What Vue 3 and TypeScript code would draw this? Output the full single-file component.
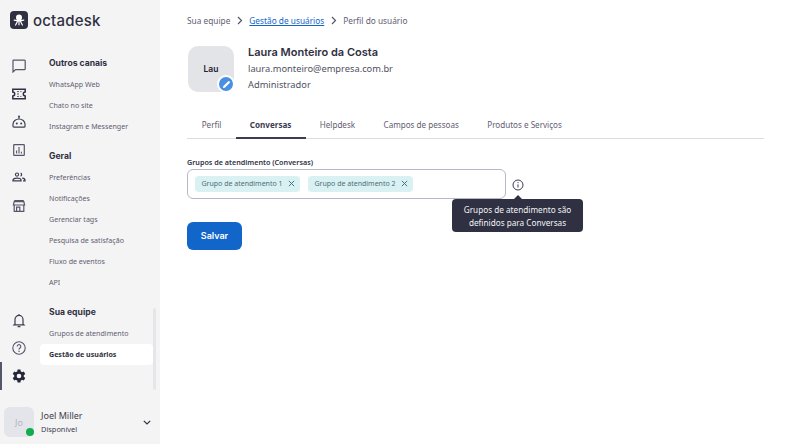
<script setup lang="ts">
const topIcons = ['chat', 'ticket', 'bot', 'chart', 'people', 'store']
const sections = [
  { title: 'Outros canais', items: ['WhatsApp Web', 'Chato no site', 'Instagram e Messenger'] },
  { title: 'Geral', items: ['Preferências', 'Notificações', 'Gerenciar tags', 'Pesquisa de satisfação', 'Fluxo de eventos', 'API'] },
  { title: 'Sua equipe', items: ['Grupos de atendimento', 'Gestão de usuários'] },
]
const tabs = ['Perfil', 'Conversas', 'Helpdesk', 'Campos de pessoas', 'Produtos e Serviços']
const chips = ['Grupo de atendimento 1', 'Grupo de atendimento 2']
</script>

<template>
  <div class="page">
    <aside class="sidebar">
      <div class="logo">
        <svg class="logo-mark" width="18" height="18" viewBox="0 0 18 18">
          <rect width="18" height="18" rx="4" fill="#2f3042" />
          <circle cx="9" cy="6.4" r="3" fill="#fff" />
          <rect x="6.8" y="7" width="4.4" height="3.4" fill="#fff" />
          <path d="M7 9.6 4.2 9.2M11 9.6l2.8-.4M7.6 10.2 5.6 14M10.4 10.2l2 3.8M9 10.4v3.4" stroke="#fff" stroke-width="1.2" stroke-linecap="round" fill="none" />
        </svg>
        <span class="logo-text">octadesk</span>
      </div>
      <div class="side-body">
        <div class="rail">
          <div class="rail-group">
            <span v-for="icon in topIcons" :key="icon" class="rail-icon">
              <svg width="14" height="14" viewBox="0 0 14 14" fill="none" stroke="#55566a" stroke-width="1.1">
                <path v-if="icon === 'chat'" d="M1.4 1.2h11.2a.6.6 0 0 1 .6.6v8.2a.6.6 0 0 1-.6.6H3.6L1 13V1.6z" stroke-width="1.2" />
                <g v-else-if="icon === 'ticket'" stroke="#2f3042">
                  <path d="M.8 2.2h12.4v2.9a1.9 1.9 0 0 0 0 3.8v2.9H.8V8.9a1.9 1.9 0 0 0 0-3.8z" stroke-width="1.5" />
                  <path d="M5.2 4.6h1.6M5.2 7h1.6M5.2 9.4h1.6M8.4 4.6h1M8.4 9.4h1" stroke-width="1" />
                </g>
                <g v-else-if="icon === 'bot'" stroke="#3c3d50">
                  <path d="M1 9.2a6 5.2 0 0 1 12 0v2a1 1 0 0 1-1 1H2a1 1 0 0 1-1-1z" stroke-width="1.2" />
                  <path d="M7 3.8V2" />
                  <circle cx="7" cy="1.4" r="1" fill="#3c3d50" stroke="none" />
                  <circle cx="4.8" cy="8.6" r="1" fill="#3c3d50" stroke="none" />
                  <circle cx="9.2" cy="8.6" r="1" fill="#3c3d50" stroke="none" />
                </g>
                <g v-else-if="icon === 'chart'">
                  <rect x="1.7" y="1.7" width="10.6" height="10.6" rx=".6" stroke-width="1.2" />
                  <path d="M4.6 10.4V7.6M7 10.4V4M9.4 10.4V8.8" />
                </g>
                <g v-else-if="icon === 'people'" stroke="#3c3d50" transform="translate(0 -.4)">
                  <circle cx="5" cy="4" r="1.6" stroke-width="1.1" />
                  <path d="M8.6 2.5a1.6 1.6 0 0 1 0 3" stroke-width="1.2" />
                  <path d="M1 10.2v-.6c0-1.3 1.9-2.1 4-2.1s4 .8 4 2.1v.6zM10.2 7.6c1.6.2 2.8.9 2.8 2v.6h-2" stroke-width="1.3" />
                </g>
                <path v-else d="M2.2 1.6h9.6M1.4 6l.8-3.4h9.6l.8 3.4zM2.2 6v6.4h5.6V8.2H4.6v4.2M11.8 6v6.4H7.8" stroke-width="1.2" />
              </svg>
            </span>
          </div>
          <div class="rail-group">
            <span class="rail-icon">
              <svg width="14" height="15" viewBox="0 0 14 15" fill="none" stroke="#3c3d50" stroke-width="1.2">
                <path d="M3 10.8V6.4a4 4 0 0 1 8 0v4.4l1 1H2zM5.6 13.6h2.8M7 1v1.4" />
              </svg>
            </span>
            <span class="rail-icon">
              <svg width="14" height="14" viewBox="0 0 14 14" fill="none" stroke="#55566a" stroke-width="1.1">
                <circle cx="7" cy="7" r="6.2" />
                <path d="M5.2 5.4a1.8 1.8 0 1 1 2.7 1.6c-.6.4-.9.7-.9 1.4" />
                <circle cx="7" cy="10.2" r=".75" fill="#55566a" stroke="none" />
              </svg>
            </span>
            <span class="rail-icon active">
              <svg width="16" height="16" viewBox="0 0 24 24" fill="#23243a">
                <path fill-rule="evenodd" d="M19.6 13.2a7.8 7.8 0 0 0 0-2.4l2.3-1.7-2.2-3.8-2.6 1.1a8 8 0 0 0-2-1.2L14.7 2.4h-4.4l-.4 2.8a8 8 0 0 0-2 1.2L5.3 5.3 3.1 9.1l2.3 1.7a7.8 7.8 0 0 0 0 2.4l-2.3 1.7 2.2 3.8 2.6-1.1a8 8 0 0 0 2 1.2l.4 2.8h4.4l.4-2.8a8 8 0 0 0 2-1.2l2.6 1.1 2.2-3.8zM12.5 15.5a3.5 3.5 0 1 1 0-7 3.5 3.5 0 0 1 0 7z" transform="translate(-.5 0)" />
              </svg>
            </span>
          </div>
        </div>
        <nav class="menu">
          <section v-for="section in sections" :key="section.title" class="menu-section">
            <h3>{{ section.title }}</h3>
            <a v-for="item in section.items" :key="item" class="menu-item" :class="{ selected: item === 'Gestão de usuários' }">{{ item }}</a>
          </section>
          <span class="scrollbar"></span>
        </nav>
      </div>
      <div class="user">
        <div class="user-avatar">Jo<span class="dot"></span></div>
        <div class="user-text">
          <span class="user-name">Joel Miller</span>
          <span class="user-status">Disponível</span>
        </div>
        <svg class="chevron" width="8" height="5" viewBox="0 0 8 5" fill="none" stroke="#2f3042" stroke-width="1.2">
          <path d="M.8.8 4 4 7.2.8" />
        </svg>
      </div>
    </aside>

    <main class="content">
      <div class="crumbs">
        <span>Sua equipe</span>
        <svg width="6" height="9" viewBox="0 0 6 9" fill="none" stroke="#555668" stroke-width="1.2"><path d="M1 1l3.5 3.5L1 8" /></svg>
        <a>Gestão de usuários</a>
        <svg width="6" height="9" viewBox="0 0 6 9" fill="none" stroke="#555668" stroke-width="1.2"><path d="M1 1l3.5 3.5L1 8" /></svg>
        <span>Perfil do usuário</span>
      </div>

      <div class="profile">
        <div class="avatar">
          Lau
          <span class="edit">
            <svg width="9" height="9" viewBox="0 0 10 10"><path d="M1 9l.5-2.2L7 1.3a.8.8 0 0 1 1.1 0l.6.6a.8.8 0 0 1 0 1.1L3.2 8.5z" fill="#fff" /></svg>
          </span>
        </div>
        <div class="who">
          <strong>Laura Monteiro da Costa</strong>
          <span>laura.monteiro@empresa.com.br</span>
          <span>Administrador</span>
        </div>
      </div>

      <div class="tabs">
        <span v-for="tab in tabs" :key="tab" class="tab" :class="{ current: tab === 'Conversas' }">{{ tab }}</span>
      </div>

      <label class="field-label">Grupos de atendimento (Conversas)</label>
      <div class="field-row">
        <div class="field">
          <span v-for="chip in chips" :key="chip" class="chip">
            {{ chip }}
            <svg width="7" height="7" viewBox="0 0 8 8" fill="none" stroke="#3d7078" stroke-width="1.1"><path d="M1 1l6 6M7 1L1 7" /></svg>
          </span>
        </div>
        <span class="info">
          <svg width="12" height="12" viewBox="0 0 12 12" fill="none" stroke="#3c3d50" stroke-width="1">
            <circle cx="6" cy="6" r="5" />
            <path d="M6 5.4v3" />
            <circle cx="6" cy="3.6" r=".6" fill="#3c3d50" stroke="none" />
          </svg>
          <span class="tooltip">Grupos de atendimento são definidos para Conversas</span>
        </span>
      </div>

      <button class="save" type="button">Salvar</button>
    </main>
  </div>
</template>

<style>
html, body { margin: 0; background: #fff; }
</style>

<style scoped>
.page {
  display: flex;
  width: 791px;
  height: 444px;
  overflow: hidden;
  font-family: "Noto Sans", sans-serif;
  color: #2f3042;
  background: #fff;
}
.sidebar {
  width: 160px;
  flex: none;
  display: flex;
  flex-direction: column;
  background: #f4f4f4;
}
.logo {
  height: 38px;
  padding: 2px 0 0 10px;
  box-sizing: border-box;
  display: flex;
  align-items: center;
  gap: 5px;
}
.logo-text {
  font-family: Inter, sans-serif;
  font-size: 15px;
  font-weight: 500;
  letter-spacing: 0.2px;
  color: #2f3042;
}
.side-body {
  flex: 1;
  display: flex;
  min-height: 0;
}
.rail {
  width: 40px;
  flex: none;
  display: flex;
  flex-direction: column;
  justify-content: space-between;
  padding: 14px 0 0;
  box-sizing: border-box;
}
.rail-group { display: flex; flex-direction: column; }
.rail-icon {
  position: relative;
  height: 28px;
  display: flex;
  align-items: center;
  justify-content: center;
  padding-right: 2px;
}
.rail-icon.active::before {
  content: "";
  position: absolute;
  left: 0;
  top: 0;
  width: 2px;
  height: 28px;
  background: #55566a;
}
.menu {
  position: relative;
  flex: 1;
  padding-top: 15px;
}
.menu-section { margin-bottom: 9px; }
.menu-section h3 {
  margin: 0 0 1px 9px;
  height: 20px;
  line-height: 20px;
  font-family: Inter, sans-serif;
  font-size: 8.6px;
  font-weight: 700;
  color: #2f3042;
}
.menu-item {
  display: block;
  width: 113px;
  height: 21px;
  line-height: 21px;
  padding-left: 9px;
  box-sizing: border-box;
  font-size: 7.1px;
  color: #5f6072;
}
.menu-item.selected {
  background: #fff;
  border-radius: 4px;
  color: #2f3042;
  font-weight: 700;
}
.scrollbar {
  position: absolute;
  left: 113px;
  top: 270px;
  width: 3px;
  height: 82px;
  border-radius: 2px;
  background: #e6e6ea;
}
.user {
  height: 54px;
  padding: 16px 0 6px 4px;
  box-sizing: border-box;
  display: flex;
  align-items: center;
}
.user-avatar {
  position: relative;
  width: 30px;
  height: 30px;
  flex: none;
  border-radius: 6px;
  background: #e4e5ea;
  color: #b4b5bf;
  font-size: 9px;
  display: flex;
  align-items: center;
  justify-content: center;
}
.dot {
  position: absolute;
  right: 0;
  bottom: 1px;
  width: 8px;
  height: 8px;
  border-radius: 50%;
  background: #12ad4f;
}
.user-text {
  flex: 1;
  margin-left: 7px;
  display: flex;
  flex-direction: column;
  gap: 2px;
}
.user-name { font-size: 9px; line-height: 12px; color: #3c3d50; }
.user-status { font-size: 7.4px; line-height: 11px; color: #3c3d50; }
.chevron { margin-right: 9px; }
.content {
  flex: 1;
  padding: 13px 27px 0;
  min-width: 0;
}
.crumbs {
  display: flex;
  align-items: center;
  gap: 6.5px;
  height: 14px;
  font-size: 8.3px;
  color: #5f6072;
}
.crumbs a {
  color: #1366c9;
  text-decoration: underline;
}
.profile {
  display: flex;
  gap: 14px;
  margin-top: 19px;
  padding-left: 1px;
}
.avatar {
  position: relative;
  width: 46px;
  height: 46px;
  border-radius: 10px;
  background: #e3e4e8;
  display: flex;
  align-items: center;
  justify-content: center;
  font-family: Inter, sans-serif;
  font-size: 8.5px;
  font-weight: 600;
  color: #1f2030;
}
.edit {
  position: absolute;
  right: -1px;
  bottom: -1px;
  width: 14px;
  height: 14px;
  border: 2px solid #fff;
  border-radius: 50%;
  background: #4a90e2;
  display: flex;
  align-items: center;
  justify-content: center;
}
.who {
  display: flex;
  flex-direction: column;
  margin-top: -2px;
  font-size: 9.3px;
  line-height: 16.5px;
  color: #4f5062;
}
.who strong {
  font-family: Inter, sans-serif;
  font-size: 11px;
  font-weight: 600;
  color: #2f3042;
}
.tabs {
  display: flex;
  height: 30px;
  margin-top: 15px;
  width: 577px;
  padding-left: 0.5px;
  border-bottom: 1px solid #dcdce0;
  box-sizing: border-box;
  font-size: 8.1px;
  color: #5f6072;
}
.tab {
  padding: 0 14.2px;
  line-height: 31px;
}
.tab.current {
  height: 30px;
  box-sizing: border-box;
  border-bottom: 2px solid #3c3d50;
  font-weight: 700;
  color: #3c3d50;
}
.field-label {
  display: block;
  margin-top: 17px;
  height: 13px;
  line-height: 13px;
  font-size: 7.2px;
  font-weight: 600;
  color: #2f3042;
}
.field-row {
  display: flex;
  align-items: center;
  gap: 6px;
}
.field {
  width: 319px;
  height: 30px;
  box-sizing: border-box;
  border: 1px solid #b7b8c6;
  border-radius: 6px;
  display: flex;
  align-items: center;
  gap: 8.5px;
  padding: 0 7px;
}
.chip {
  height: 16px;
  border-radius: 4px;
  background: #d9f1f2;
  display: flex;
  align-items: center;
  gap: 5px;
  padding: 0 5px 0 6.5px;
  font-size: 7px;
  color: #4f6f75;
  white-space: nowrap;
}
.info {
  position: relative;
  display: flex;
  margin-top: 2px;
}
.tooltip {
  position: absolute;
  left: -60px;
  top: 20px;
  width: 131px;
  height: 33px;
  box-sizing: border-box;
  padding: 4px 8px;
  border-radius: 4px;
  background: #2f3042;
  color: #f4f4f6;
  font-size: 8.2px;
  line-height: 13px;
  text-align: center;
}
.tooltip::before {
  content: "";
  position: absolute;
  left: 62px;
  top: -4px;
  border-left: 4px solid transparent;
  border-right: 4px solid transparent;
  border-bottom: 4px solid #2f3042;
}
.save {
  display: block;
  margin-top: 23px;
  width: 55px;
  height: 28px;
  border: 0;
  border-radius: 6px;
  background: #1366c9;
  color: #fff;
  font-family: Inter, sans-serif;
  font-size: 9px;
  font-weight: 600;
}
</style>
